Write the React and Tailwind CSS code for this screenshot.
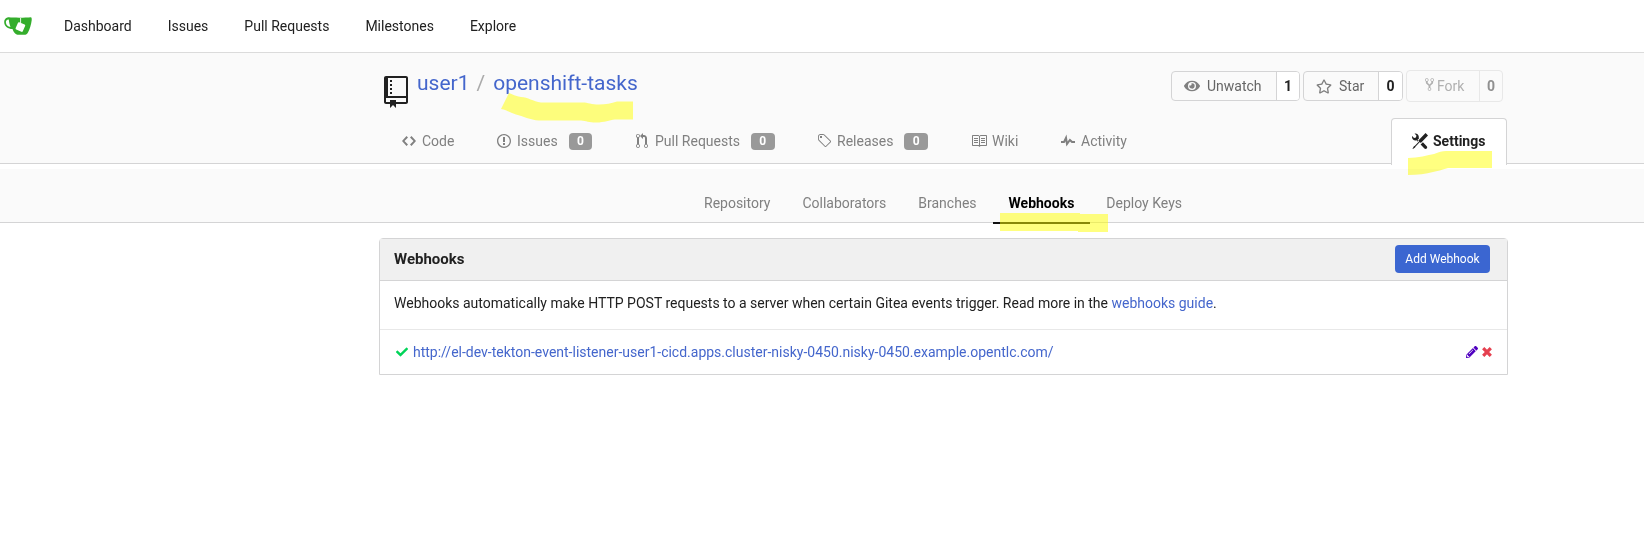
import React from "react";
import { FaEye, FaRegStar, FaCheck, FaPencilAlt } from "react-icons/fa";

const paths = {
  repo: "M4 9H3V8h1v1zm0-3H3v1h1V6zm0-2H3v1h1V4zm0-2H3v1h1V2zm8-1v12c0 .55-.45 1-1 1H6v2l-1.5-1.5L3 16v-2H1c-.55 0-1-.45-1-1V1c0-.55.45-1 1-1h10c.55 0 1 .45 1 1zm-1 10H1v2h2v-1h3v1h5v-2zm0-10H2v9h9V1z",
  code: "M9.5 3L8 4.5 11.5 8 8 11.5 9.5 13 14 8 9.5 3zm-5 0L0 8l4.5 5L6 11.5 2.5 8 6 4.5 4.5 3z",
  issue: "M7 2.3c3.14 0 5.7 2.56 5.7 5.7s-2.56 5.7-5.7 5.7A5.71 5.71 0 0 1 1.3 8c0-3.14 2.56-5.7 5.7-5.7zM7 1C3.14 1 0 4.14 0 8s3.14 7 7 7 7-3.14 7-7-3.14-7-7-7zm1 3H6v5h2V4zm0 6H6v2h2v-2z",
  pull: "M11 11.28V5c-.03-.78-.34-1.47-.94-2.06C9.46 2.35 8.78 2.03 8 2H7V0L4 3l3 3V4h1c.27.02.48.11.69.31.21.2.3.42.31.69v6.28A1.993 1.993 0 0 0 10 15a1.993 1.993 0 0 0 1-3.72zm-1 2.92c-.66 0-1.2-.55-1.2-1.2 0-.65.55-1.2 1.2-1.2.65 0 1.2.55 1.2 1.2 0 .65-.55 1.2-1.2 1.2zM4 3c0-1.11-.89-2-2-2a1.993 1.993 0 0 0-1 3.72v6.56A1.993 1.993 0 0 0 2 15a1.993 1.993 0 0 0 1-3.72V4.72c.59-.34 1-.98 1-1.72zm-.8 10c0 .66-.55 1.2-1.2 1.2-.65 0-1.2-.55-1.2-1.2 0-.65.55-1.2 1.2-1.2.65 0 1.2.55 1.2 1.2zM2 4.2C1.34 4.2.8 3.65.8 3c0-.65.55-1.2 1.2-1.2.65 0 1.2.55 1.2 1.2 0 .65-.55 1.2-1.2 1.2z",
  tag: "M7.73 1.73C7.26 1.26 6.62 1 5.96 1H3.5C2.13 1 1 2.13 1 3.5v2.47c0 .66.27 1.3.73 1.77l6.06 6.06c.39.39 1.02.39 1.41 0l4.59-4.59a.996.996 0 0 0 0-1.41L7.73 1.73zM2.38 7.09c-.31-.3-.47-.7-.47-1.13V3.5c0-.88.72-1.59 1.59-1.59h2.47c.42 0 .83.16 1.13.47l6.14 6.13-4.73 4.73-6.13-6.15zM3.01 3h2v2H3V3h.01z",
  book: "M3 5h4v1H3V5zm0 3h4V7H3v1zm0 2h4V9H3v1zm11-5h-4v1h4V5zm0 2h-4v1h4V7zm0 2h-4v1h4V9zm2-6v9c0 .55-.45 1-1 1H9.5l-1 1-1-1H2c-.55 0-1-.45-1-1V3c0-.55.45-1 1-1h5.5l1 1 1-1H15c.55 0 1 .45 1 1zm-8 .5L7.5 3H2v9h6V3.5zm7-.5H9.5l-.5.5V12h6V3z",
  pulse: "M11.5 8L8.8 5.4 6.6 8.5 5.5 1.6 2.38 8H0v2h3.6l.9-1.8.9 5.4L9 8.5l1.6 1.5H14V8z",
  tools: "M4.48 7.27c.26.26 1.28 1.33 1.28 1.33l.56-.58-.88-.91 1.69-1.8s-.76-.74-.43-.45c.32-1.19.03-2.51-.87-3.44C4.93.5 3.66.2 2.52.51l1.93 2-.51 1.96-1.89.52-1.93-1.99C-.19 4.17.1 5.48 1 6.4c.94.98 2.29 1.26 3.48.87zm6.44 1.94l-2.33 2.3 3.84 3.98c.31.33.73.49 1.14.49.41 0 .82-.16 1.14-.49.63-.65.63-1.7 0-2.35l-3.79-3.93zM16 2.53L13.55 0 6.33 7.46l.88.91-4.31 4.46-.99.53-1.39 2.27.35.37 2.2-1.44.51-1.02L7.9 9.08l.88.91L16 2.53z",
  fork: "M8 1a1.993 1.993 0 0 0-1 3.72V6L5 8 3 6V4.72A1.993 1.993 0 0 0 2 1a1.993 1.993 0 0 0-1 3.72V6.5l3 3v1.78A1.993 1.993 0 0 0 5 15a1.993 1.993 0 0 0 1-3.72V9.5l3-3V4.72A1.993 1.993 0 0 0 8 1zM2 4.2C1.34 4.2.8 3.65.8 3c0-.65.55-1.2 1.2-1.2.65 0 1.2.55 1.2 1.2 0 .65-.55 1.2-1.2 1.2zm3 10c-.66 0-1.2-.55-1.2-1.2 0-.65.55-1.2 1.2-1.2.65 0 1.2.55 1.2 1.2 0 .65-.55 1.2-1.2 1.2zm3-10c-.66 0-1.2-.55-1.2-1.2 0-.65.55-1.2 1.2-1.2.65 0 1.2.55 1.2 1.2 0 .65-.55 1.2-1.2 1.2z",
};

function Icon({ name, w, className }) {
  return (
    <svg viewBox={`0 0 ${w} 16`} className={`shrink-0 ${className}`} fill="currentColor">
      <path d={paths[name]} />
    </svg>
  );
}

function Badge() {
  return (
    <span className="ml-[11px] flex h-[17px] w-[23.500px] items-center justify-center rounded-[4px] bg-[#999] text-xs font-bold text-white">
      0
    </span>
  );
}

function Tab({ icon, w, size, left, width, label, badge, gap }) {
  return (
    <a className={`flex h-full shrink-0 items-center ${width} ${left}`}>
      <Icon name={icon} w={w} className={size} />
      <span className={gap}>{label}</span>
      {badge && <Badge />}
    </a>
  );
}

export default function App() {
  return (
    <div className="h-[539px] w-[1644px] overflow-hidden bg-white font-['Roboto',sans-serif] text-sm leading-5 text-[#212121]">
      <nav className="flex h-[53px] items-center border-b border-[#dbdbdb] box-border">
        <svg viewBox="0 0 28 18" className="ml-1 h-[18px] w-7 shrink-0">
          <path d="M5 .3C9 .7 21 .8 27 .2c.8.3.8 2 .7 3-.5 4-2 9.400-3.600 12-1 1.900-2 2.500-4 2.500h-6.500c-2.400-.1-4.200-3.200-5.100-5.700C4 12 .5 9.500.2 5.500.1 2.500 2 .3 5 .3z" fill="#34ad2c" />
          <path d="M4.800 2.400C2.500 2.400 1.700 4 1.900 5.600c.2 2.500 1.800 4.100 4.600 4.500C5.700 7.500 5 5.300 4.800 2.400z" fill="#fff" />
          <path d="M15.300 5.300l5.300 2.300c.6.300.8.800.5 1.400l-2.300 5.300c-.3.600-.8.800-1.400.5l-5.200-2.300c-.6-.3-.8-.800-.5-1.400l2.300-5.300c.3-.600.8-.800 1.300-.5z" fill="#fff" />
          <path d="M16.600 1v5" stroke="#fff" strokeWidth=".9" />
        </svg>
        <div className="ml-8 flex gap-9">
          <a>Dashboard</a>
          <a>Issues</a>
          <a>Pull Requests</a>
          <a>Milestones</a>
          <a>Explore</a>
        </div>
      </nav>

      <header className="h-[111px] border-b border-[#d4d4d5] bg-[#fafafa]">
        <div className="ml-[379px] flex h-[65px] w-[1128px] justify-between">
          <div className="relative flex items-start">
            <Icon name="repo" w={12} className="ml-[5px] mt-[23px] h-8 w-6 text-[#212121]" />
            <div className="ml-[9px] mt-[16px] flex text-[21px] leading-7 text-[#4466cc]">
              <a>user1</a>
              <span className="ml-[7px] mr-2 text-[#aaa]">/</span>
              <a>openshift-tasks</a>
            </div>
            <svg className="absolute left-[122px] top-[40px] h-[30px] w-[132px]" viewBox="0 0 132 30" fill="#fdfd7c">
              <path d="M8 0L0 16C6 17 10 20 15 21.500C22 23 29 27 38 27.500H80C85 28 88 29.500 95 29.500C104 29.500 108 27 114 26.500H132V8.500H116C110 10.500 105 11.500 98 11.500C90 11.500 86 9 80 9.500H40C32 8.500 27 4 20 4C15 3.500 11 1 8 0Z" />
            </svg>
          </div>
          <div className="mr-1 mt-[17px] flex items-start text-[#666]">
            <div className="mt-px flex h-[30px] w-[129px] overflow-hidden rounded border border-[#d4d4d5]">
              <span className="flex flex-1 items-center pl-3">
                <FaEye className="h-4 w-4 text-[#808080]" />
                <span className="ml-[7px]">Unwatch</span>
              </span>
              <b className="flex w-[23px] items-center justify-center border-l border-[#d4d4d5] bg-white text-[#212121]">1</b>
            </div>
            <div className="ml-[3px] mt-px flex h-[30px] w-[100px] overflow-hidden rounded border border-[#d4d4d5]">
              <span className="flex flex-1 items-center pl-3">
                <FaRegStar className="h-[15px] w-4 text-[#808080]" />
                <span className="ml-[7px]">Star</span>
              </span>
              <b className="flex w-[24px] items-center justify-center border-l border-[#d4d4d5] bg-white text-[#212121]">0</b>
            </div>
            <div className="ml-[3px] flex h-8 w-[97px] overflow-hidden rounded border border-[#e8e8e8]">
              <span className="flex flex-1 items-center pl-[18px] text-[#b0b0b0]">
                <Icon name="fork" w={10} className="mb-1 h-[15px] w-[9px]" />
                <span className="ml-[3px]">Fork</span>
              </span>
              <b className="flex w-[23px] items-center justify-center border-l border-[#e8e8e8] text-[#909090]">0</b>
            </div>
          </div>
        </div>

        <div className="ml-[379px] flex h-[46px] w-[1128px] text-[#808080]">
          <Tab icon="code" w={14} size="h-4 w-[14px]" left="ml-[23px]" width="w-[95px]" gap="ml-[6px]" label="Code" />
          <Tab icon="issue" w={14} size="h-4 w-[14px]" left="" width="w-[139px]" gap="ml-[6px]" label="Issues" badge />
          <Tab icon="pull" w={12} size="h-4 w-3" left="" width="w-[181px]" gap="ml-[7px]" label="Pull Requests" badge />
          <Tab icon="tag" w={14} size="h-4 w-[14px]" left="" width="w-[154px]" gap="ml-[6px]" label="Releases" badge />
          <Tab icon="book" w={16} size="h-4 w-4" left="" width="w-[90px]" gap="ml-[5px]" label="Wiki" />
          <Tab icon="pulse" w={14} size="h-4 w-[14px]" left="" width="w-[100px]" gap="ml-[6px]" label="Activity" />
          <a className="relative ml-auto h-[47px] w-[116px] rounded-t border border-b-0 border-[#d4d4d5] bg-white font-bold text-[#212121]">
            <span className="flex h-[43px] items-center pl-5">
              <Icon name="tools" w={16} className="h-4 w-4" />
              <span className="ml-[5px]">Settings</span>
            </span>
            <svg className="absolute left-[16px] top-[31px] z-10 h-[26px] w-[84px] mix-blend-multiply" viewBox="0 0 84 26" fill="#ffff80">
              <path d="M0 8C10 8 20 5 26 4C31 2 34 1 38 1H84V18H40C34 20 29 21 25 22C18 24 10 25 0 25Z" />
            </svg>
          </a>
        </div>
      </header>

      <div className="mt-[5px] h-[54px] border-b border-[#d4d4d5] bg-[#fafafa] text-[#808080]">
        <div className="ml-[379px] flex h-[55px] w-[1128px] justify-center">
          {["Repository", "Collaborators", "Branches"].map((t) => (
            <a key={t} className="px-4 pt-6">{t}</a>
          ))}
          <a className="relative border-b-2 border-[#111] px-4 pt-6 font-bold text-black">
            Webhooks
            <svg className="absolute left-[7px] top-[43px] z-10 h-[20px] w-[108px]" viewBox="0 0 108 20" fill="#ffff00" fillOpacity=".5">
              <path d="M0 1H80V2H108V20H78V19H0Z" />
            </svg>
          </a>
          <a className="px-4 pt-6">Deploy Keys</a>
        </div>
      </div>

      <main className="ml-[379px] mt-[15px] w-[1129px] rounded-t border border-[#d4d4d5]">
        <div className="flex h-[42px] items-center justify-between border-b border-[#d4d4d5] bg-[#f0f0f0] pb-px pl-[14px] pr-[17px]">
          <b className="text-[15px]">Webhooks</b>
          <button className="h-7 w-[95px] rounded bg-[#3b66d1] text-xs leading-7 text-white">Add Webhook</button>
        </div>
        <div className="flex h-[49px] items-center whitespace-pre border-b border-[#e8e8e8] pb-[4px] pl-[14px]">
          Webhooks automatically make HTTP POST requests to a server when certain Gitea events trigger. Read more in the <a className="text-[#4466cc]">webhooks guide</a>.
        </div>
        <div className="flex h-[44px] items-center pl-[16px] pr-[15px]">
          <FaCheck className="h-3 w-3 text-[#00d458]" />
          <a className="ml-[5px] text-[#4466cc]">http://el-dev-tekton-event-listener-user1-cicd.apps.cluster-nisky-0450.nisky-0450.example.opentlc.com/</a>
          <FaPencilAlt className="ml-auto h-3 w-3 text-[#5000c0]" />
          <svg viewBox="0 0 10 10" className="ml-1 h-[10px] w-[10px]">
            <path d="M1.200 1.200L8.800 8.800M8.800 1.200L1.200 8.800" stroke="#e5404f" strokeWidth="3.200" />
          </svg>
        </div>
      </main>
    </div>
  );
}
